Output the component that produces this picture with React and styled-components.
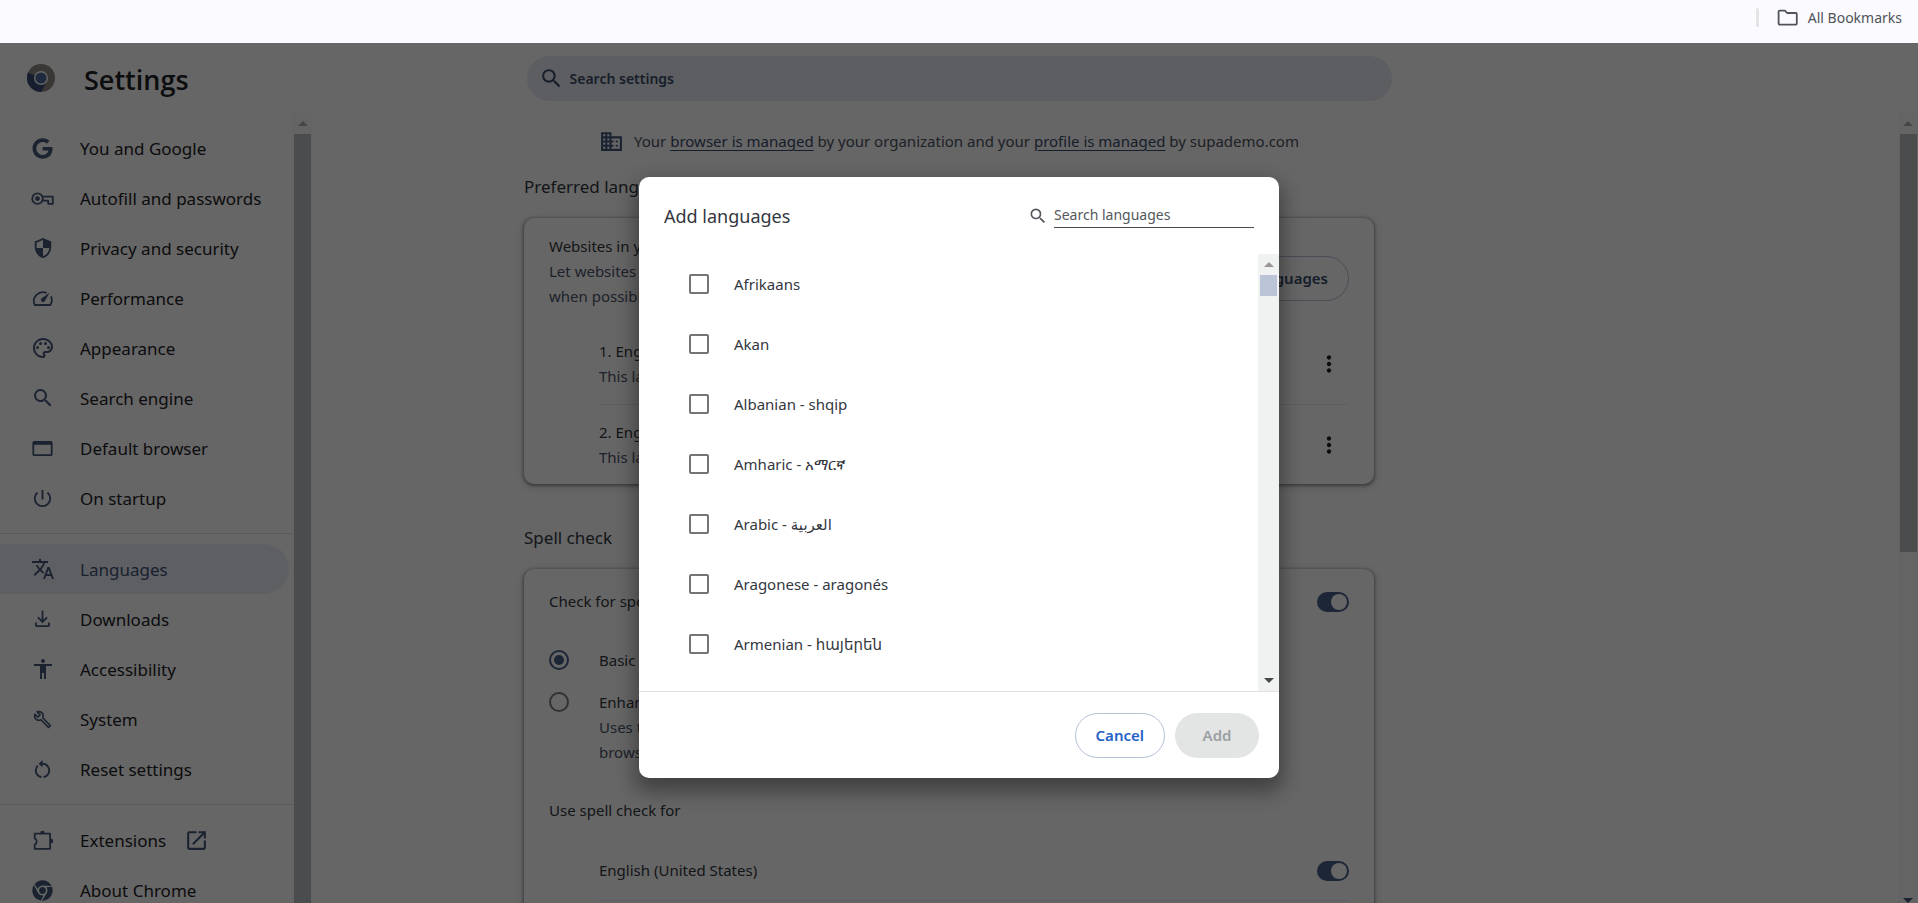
import styled, { createGlobalStyle } from "styled-components";
import {
  MdAccessibility,
  MdBusiness,
  MdMoreVert,
  MdOpenInNew,
  MdOutlineBuild,
  MdOutlinePalette,
  MdPowerSettingsNew,
  MdRestartAlt,
  MdSearch,
  MdSecurity,
  MdTranslate,
} from "react-icons/md";
import { FaChrome, FaGoogle } from "react-icons/fa";

const GlobalStyle = createGlobalStyle`
  * {
    box-sizing: border-box;
  }
  body {
    margin: 0;
    font-family: "Noto Sans", "Open Sans", "DejaVu Sans", sans-serif;
    font-size: 15px;
    line-height: 25px;
    color: #33373e;
  }
  button, input {
    font: inherit;
  }
  h1, h2, p, ul, ol {
    margin: 0;
    padding: 0;
    font-weight: 400;
  }
  ul, ol {
    list-style: none;
  }
`;

const Page = styled.div`
  display: flex;
  flex-direction: column;
  height: 100vh;
  overflow: hidden;
`;

const BookmarksBar = styled.div`
  flex: none;
  display: flex;
  justify-content: flex-end;
  align-items: flex-start;
  height: 43px;
  padding: 5px 16px 0 0;
  background: #fafaff;
`;
const BarDivider = styled.span`
  width: 3px;
  height: 19px;
  margin: 3px 16px 0 0;
  border-radius: 2px;
  background: #e3e4e6;
`;
const BookmarksButton = styled.button`
  display: flex;
  align-items: center;
  gap: 8px;
  padding: 0;
  border: none;
  background: none;
  font-size: 14px;
  color: #505358;
`;

const Settings = styled.div`
  position: relative;
  flex: 1;
  display: flex;
  flex-direction: column;
  min-height: 0;
  background: #fff;
`;
const Header = styled.header`
  flex: none;
  display: grid;
  grid-template-columns: 1fr minmax(0, 865px) 1fr;
  height: 70px;
`;
const Brand = styled.div`
  display: flex;
  align-items: center;
  gap: 29px;
  padding: 0 0 0 27px;
`;
const Title = styled.h1`
  padding-top: 4px;
  font-family: "Open Sans", "Noto Sans", sans-serif;
  font-size: 27px;
  font-weight: 600;
  line-height: 36px;
  color: #1f2226;
`;
const SearchBox = styled.label`
  display: flex;
  align-items: center;
  gap: 6px;
  height: 45px;
  margin-top: 13px;
  padding: 0 12px;
  border-radius: 23px;
  background: #e6eaf4;
  color: #3d4d68;
`;
const SearchInput = styled.input`
  flex: 1;
  min-width: 0;
  padding: 0;
  border: none;
  outline: none;
  background: none;
  font-size: 14px;
  font-weight: 600;
  &::placeholder {
    color: #3d4d68;
    opacity: 1;
  }
`;

const Columns = styled.div`
  flex: 1;
  display: flex;
  min-height: 0;
`;
const ContentGrid = styled.div`
  flex: 1;
  display: grid;
  grid-template-columns: 1fr minmax(0, 850px) 1fr;
  min-height: 0;
`;
const Sidebar = styled.aside`
  display: flex;
  width: 313px;
  min-height: 0;
`;
const Menu = styled.nav`
  flex: 1;
  padding-top: 10px;
  overflow: hidden;
`;
const MenuGroup = styled.ul`
  & + & {
    margin-top: 10px;
    padding-top: 10px;
    border-top: 1px solid #dfe0e3;
  }
`;
const MenuLink = styled.a`
  display: flex;
  align-items: center;
  gap: 25px;
  height: 50px;
  margin: 0 3px 0 0;
  padding-left: 30px;
  border-radius: 0 25px 25px 0;
  background: ${(props) => (props.$active ? "#e9edf7" : "none")};
  color: ${(props) => (props.$active ? "#3f5275" : "#1e2126")};
  font-size: 17px;
  text-decoration: none;
`;
const MenuIcon = styled.span`
  display: flex;
  align-items: center;
  justify-content: center;
  width: 25px;
  height: 25px;
  color: #44577a;
`;
const MenuText = styled.span`
  display: flex;
  align-items: center;
  gap: 18px;
`;

const ScrollTrack = styled.div`
  flex: none;
  display: flex;
  flex-direction: column;
  align-items: center;
  width: ${(props) => props.$width || 21}px;
  background: ${(props) => props.$track || "#fafafa"};
`;
const ScrollButton = styled.button`
  flex: none;
  display: flex;
  align-items: ${(props) => (props.$end ? "flex-end" : "center")};
  justify-content: center;
  width: 17px;
  height: 21px;
  padding: 0;
  border: none;
  background: none;
  color: ${(props) => props.$color};
`;
const ScrollThumb = styled.div`
  width: 17px;
  height: ${(props) => props.$height};
  background: ${(props) => props.$color || "#bbbdc2"};
`;
const ScrollRest = styled.div`
  flex: 1;
`;

const Main = styled.main`
  min-width: 0;
  overflow: visible;
`;
const ManagedNote = styled.p`
  display: flex;
  align-items: center;
  justify-content: center;
  gap: 10px;
  padding-top: 16px;
  color: #4b525e;
  svg {
    color: #44577a;
  }
  a {
    color: #3a4b6b;
    text-underline-offset: 3px;
  }
`;
const SectionTitle = styled.h2`
  padding: ${(props) => (props.$first ? "19px" : "40px")} 0 17px;
  font-size: 17px;
  line-height: 28px;
`;
const Card = styled.section`
  padding: 16px 25px 0;
  border-radius: 10px;
  background: #fff;
  box-shadow: 0 1px 3px 1px #9a9ca2, 0 2px 8px 2px #e4e5e8;
`;
const CardIntro = styled.div`
  display: flex;
  align-items: flex-start;
  justify-content: space-between;
  height: 75px;
`;
const AddButtonSlot = styled.div`
  padding-top: 22px;
`;
const Secondary = styled.span`
  display: block;
  color: #4b556a;
`;
const PillButton = styled.button`
  min-width: 84px;
  height: 45px;
  padding: 0 20px;
  border: 1px solid ${(props) => (props.disabled ? "transparent" : "#b5c1d6")};
  border-radius: 23px;
  background: ${(props) => (props.disabled ? "#e3e4e4" : "#fff")};
  color: ${(props) => (props.disabled ? "#9c9fa3" : props.$color)};
  font-weight: 600;
`;
const LanguageList = styled.ol`
  padding: 15px 0 0 50px;
`;
const LanguageItem = styled.li`
  display: flex;
  align-items: center;
  justify-content: space-between;
  height: 80px;
  & + & {
    border-top: 1px solid #e9eaee;
  }
`;
const DotsButton = styled.button`
  display: flex;
  justify-content: center;
  width: 40px;
  padding: 0;
  border: none;
  background: none;
  color: #1f1f1f;
`;
const SettingRow = styled.label`
  display: flex;
  align-items: center;
  justify-content: space-between;
  height: 33px;
`;
const LanguageChecks = styled.div`
  padding: 0 0 30px 50px;
  ${SettingRow} {
    height: 60px;
    border-bottom: 1px solid #e9eaee;
  }
`;
const Toggle = styled.input`
  appearance: none;
  display: flex;
  justify-content: flex-end;
  width: 32px;
  height: 20px;
  margin: 0;
  padding: 2px;
  border-radius: 10px;
  background: #465f87;
  &::after {
    content: "";
    width: 16px;
    height: 16px;
    border-radius: 50%;
    background: #fff;
  }
`;
const RadioGroup = styled.div`
  display: flex;
  flex-direction: column;
  gap: 17px;
  padding-top: 30px;
`;
const RadioRow = styled.label`
  display: flex;
  align-items: flex-start;
  gap: 30px;
`;
const Radio = styled.input`
  appearance: none;
  flex: none;
  display: grid;
  place-items: center;
  width: 20px;
  height: 20px;
  margin: 2px 0 0;
  border: 2px solid #7d7c78;
  border-radius: 50%;
  &:checked {
    border-color: #465f87;
  }
  &:checked::after {
    content: "";
    width: 10px;
    height: 10px;
    border-radius: 50%;
    background: #465f87;
  }
`;
const Subheading = styled.p`
  padding: 33px 0 18px;
`;

const Backdrop = styled.div`
  position: absolute;
  inset: 0;
  display: flex;
  align-items: center;
  justify-content: center;
  padding-top: 9px;
  background: rgba(0, 0, 0, 0.6);
`;
const Dialog = styled.div`
  display: flex;
  flex-direction: column;
  width: 640px;
  max-width: 90%;
  border-radius: 10px;
  background: #fff;
  box-shadow: 0 10px 20px 4px rgba(0, 0, 0, 0.36);
  overflow: hidden;
`;
const DialogHeader = styled.div`
  display: flex;
  align-items: center;
  justify-content: space-between;
  height: 77px;
  padding: 1px 25px 0;
`;
const DialogTitle = styled.h2`
  font-size: 18px;
`;
const LanguageSearch = styled.label`
  display: flex;
  align-items: center;
  gap: 6px;
  color: #54575c;
`;
const LanguageInput = styled.input`
  width: 200px;
  height: 23px;
  padding: 0 0 3px;
  border: none;
  border-bottom: 1px solid #47494d;
  outline: none;
  font-size: 14px;
  &::placeholder {
    color: #54575c;
    opacity: 1;
  }
`;
const DialogBody = styled.div`
  display: flex;
  height: 438px;
  border-bottom: 1px solid #e0e1e3;
`;
const Options = styled.div`
  flex: 1;
  padding-left: 50px;
  overflow: hidden;
`;
const Option = styled.label`
  display: flex;
  align-items: center;
  gap: 25px;
  height: 60px;
`;
const Checkbox = styled.input`
  appearance: none;
  width: 20px;
  height: 20px;
  margin: 0;
  border: 2px solid #757575;
  border-radius: 2px;
`;
const DialogFooter = styled.div`
  display: flex;
  justify-content: flex-end;
  gap: 10px;
  padding: 21px 20px 20px;
`;

const Stroke = ({ children, width = 2 }) => (
  <svg
    width="25"
    height="25"
    viewBox="0 0 25 25"
    fill="none"
    stroke="currentColor"
    strokeWidth={width}
    aria-hidden="true"
  >
    {children}
  </svg>
);

const KeyIcon = () => (
  <Stroke width={1.8}>
    <circle cx="7.5" cy="12.6" r="5.3" />
    <circle cx="7.5" cy="12.6" r="2.4" fill="currentColor" stroke="none" />
    <path d="M12.3 10.6h10.5v7.2h-4.6v-3.2h-6" strokeLinejoin="round" />
  </Stroke>
);

const SpeedIcon = () => (
  <Stroke width={1.8}>
    <path d="M16.6 6.9A9.2 9.2 0 0 0 4.6 19h15.8a9.2 9.2 0 0 0 .6-8.6" strokeLinejoin="round" />
    <path d="M19.8 6.4l-5.2 8.8a2.1 2.1 0 0 1-3.2-2.8z" fill="currentColor" stroke="none" />
  </Stroke>
);

const BrowserIcon = () => (
  <Stroke width={1.8}>
    <rect x="3.3" y="6" width="18.4" height="13.2" rx="1" />
    <path d="M3 7.3h19" strokeWidth="3" />
  </Stroke>
);

const DownloadIcon = () => (
  <Stroke width={1.8}>
    <path d="M12.5 3.5v11.2M7.9 10.3l4.6 4.6 4.6-4.6M6 15.6v2.6c0 .6.4 1 1 1h11c.6 0 1-.4 1-1v-2.6" />
  </Stroke>
);

const ExtensionIcon = () => (
  <Stroke width={1.8}>
    <path
      d="M4.7 5.6h15.4v15.2H4.7v-4.2c2.6-1 2.6-5.2 0-6.2z"
      strokeLinejoin="round"
    />
    <path d="M10.2 5a2.3 2.3 0 0 1 4.6 0zM21 10.8a2.3 2.3 0 0 1 0 4.6z" fill="currentColor" stroke="none" />
  </Stroke>
);

const FolderIcon = () => (
  <Stroke width={1.8}>
    <path
      d="M4.6 5.6h5.3l2.2 2.4h8.7c.6 0 1 .4 1 1v9.6c0 .6-.4 1-1 1H4.6c-.6 0-1-.4-1-1v-12c0-.6.4-1 1-1z"
      strokeLinejoin="round"
    />
  </Stroke>
);

const ChromeLogo = () => (
  <svg width="28" height="28" viewBox="0 0 28 28" aria-hidden="true">
    <circle cx="14" cy="14" r="14" fill="#8f8c84" />
    <path d="M14 14L1 8.6A14 14 0 0 0 14 28l5-8.5z" fill="#3a4d76" />
    <circle cx="14" cy="14" r="7" fill="#fff" />
    <circle cx="14" cy="14" r="5.6" fill="#4e699f" />
  </svg>
);

const menu = [
  [
    { label: "You and Google", icon: <FaGoogle size={21} /> },
    { label: "Autofill and passwords", icon: <KeyIcon /> },
    { label: "Privacy and security", icon: <MdSecurity size={22} /> },
    { label: "Performance", icon: <SpeedIcon /> },
    { label: "Appearance", icon: <MdOutlinePalette size={24} /> },
    { label: "Search engine", icon: <MdSearch size={24} /> },
    { label: "Default browser", icon: <BrowserIcon /> },
    { label: "On startup", icon: <MdPowerSettingsNew size={23} /> },
  ],
  [
    { label: "Languages", icon: <MdTranslate size={24} />, active: true },
    { label: "Downloads", icon: <DownloadIcon /> },
    { label: "Accessibility", icon: <MdAccessibility size={24} /> },
    { label: "System", icon: <MdOutlineBuild size={19} /> },
    { label: "Reset settings", icon: <MdRestartAlt size={23} /> },
  ],
  [
    { label: "Extensions", icon: <ExtensionIcon />, external: true },
    { label: "About Chrome", icon: <FaChrome size={21} /> },
  ],
];

const languages = [
  "Afrikaans",
  "Akan",
  "Albanian - shqip",
  "Amharic - አማርኛ",
  "Arabic - العربية",
  "Aragonese - aragonés",
  "Armenian - հայերեն",
];

const preferred = ["English (US)", "English"];

const Scrollbar = ({ width, track, thumb, height, up = "#b0b0b2", down = "#44577a", end }) => (
  <ScrollTrack $width={width} $track={track}>
    <ScrollButton $color={up} aria-label="Scroll up">
      <svg width="10" height="5" viewBox="0 0 10 5">
        <path d="M0 5L5 0l5 5z" fill="currentColor" />
      </svg>
    </ScrollButton>
    <ScrollThumb $height={height} $color={thumb} />
    <ScrollRest />
    <ScrollButton $color={down} $end={end} aria-label="Scroll down">
      <svg width="10" height="5" viewBox="0 0 10 5">
        <path d="M0 0l5 5 5-5z" fill="currentColor" />
      </svg>
    </ScrollButton>
  </ScrollTrack>
);

const SideMenu = () => (
  <Sidebar>
    <Menu>
      {menu.map((group, i) => (
        <MenuGroup key={i}>
          {group.map((item) => (
            <li key={item.label}>
              <MenuLink href="#" $active={item.active}>
                <MenuIcon>{item.icon}</MenuIcon>
                <MenuText>
                  {item.label}
                  {item.external && (
                    <MenuIcon>
                      <MdOpenInNew size={25} />
                    </MenuIcon>
                  )}
                </MenuText>
              </MenuLink>
            </li>
          ))}
        </MenuGroup>
      ))}
    </Menu>
    <Scrollbar height="calc(100% - 41px)" end />
  </Sidebar>
);

const LanguagesPage = () => (
  <Main>
    <ManagedNote>
      <MdBusiness size={25} />
      <span>
        Your <a href="#">browser is managed</a> by your organization and your{" "}
        <a href="#">profile is managed</a> by supademo.com
      </span>
    </ManagedNote>
    <SectionTitle $first>Preferred languages</SectionTitle>
    <Card>
      <CardIntro>
        <div>
          Websites in your languages
          <Secondary>Let websites know them</Secondary>
          <Secondary>when possible</Secondary>
        </div>
        <AddButtonSlot>
          <PillButton $color="#3a4b6b">Add languages</PillButton>
        </AddButtonSlot>
      </CardIntro>
      <LanguageList>
        {preferred.map((name, i) => (
          <LanguageItem key={name}>
            <div>
              {i + 1}. {name}
              <Secondary>This language</Secondary>
            </div>
            <DotsButton aria-label={`More actions, ${name}`}>
              <MdMoreVert size={26} />
            </DotsButton>
          </LanguageItem>
        ))}
      </LanguageList>
    </Card>
    <SectionTitle>Spell check</SectionTitle>
    <Card>
      <SettingRow>
        Check for spelling
        <Toggle type="checkbox" role="switch" defaultChecked />
      </SettingRow>
      <RadioGroup>
        <RadioRow>
          <Radio type="radio" name="spell" defaultChecked />
          <span>Basic spell check</span>
        </RadioRow>
        <RadioRow>
          <Radio type="radio" name="spell" />
          <span>
            Enhanced spell check
            <Secondary>Uses the same spell checker as your</Secondary>
            <Secondary>browser search</Secondary>
          </span>
        </RadioRow>
      </RadioGroup>
      <Subheading>Use spell check for</Subheading>
      <LanguageChecks>
        <SettingRow>
          English (United States)
          <Toggle type="checkbox" role="switch" defaultChecked />
        </SettingRow>
      </LanguageChecks>
    </Card>
  </Main>
);

const AddLanguages = () => (
  <Backdrop>
    <Dialog role="dialog" aria-labelledby="dialog-title">
      <DialogHeader>
        <DialogTitle id="dialog-title">Add languages</DialogTitle>
        <LanguageSearch>
          <MdSearch size={20} />
          <LanguageInput placeholder="Search languages" aria-label="Search languages" />
        </LanguageSearch>
      </DialogHeader>
      <DialogBody>
        <Options>
          {languages.map((name) => (
            <Option key={name}>
              <Checkbox type="checkbox" />
              <span>{name}</span>
            </Option>
          ))}
        </Options>
        <Scrollbar track="#f0f2f2" thumb="#bac4d6" height="21px" up="#9a9796" down="#47494b" />
      </DialogBody>
      <DialogFooter>
        <PillButton $color="#2462c8">Cancel</PillButton>
        <PillButton disabled>Add</PillButton>
      </DialogFooter>
    </Dialog>
  </Backdrop>
);

const App = () => {
  return (
    <Page>
      <GlobalStyle />
      <BookmarksBar>
        <BarDivider />
        <BookmarksButton>
          <FolderIcon />
          All Bookmarks
        </BookmarksButton>
      </BookmarksBar>
      <Settings>
        <Header>
          <Brand>
            <ChromeLogo />
            <Title>Settings</Title>
          </Brand>
          <SearchBox>
            <MdSearch size={25} />
            <SearchInput placeholder="Search settings" aria-label="Search settings" />
          </SearchBox>
        </Header>
        <Columns>
          <ContentGrid>
            <SideMenu />
            <LanguagesPage />
          </ContentGrid>
          <Scrollbar width={20} height="418px" end />
        </Columns>
        <AddLanguages />
      </Settings>
    </Page>
  );
};

export default App;
